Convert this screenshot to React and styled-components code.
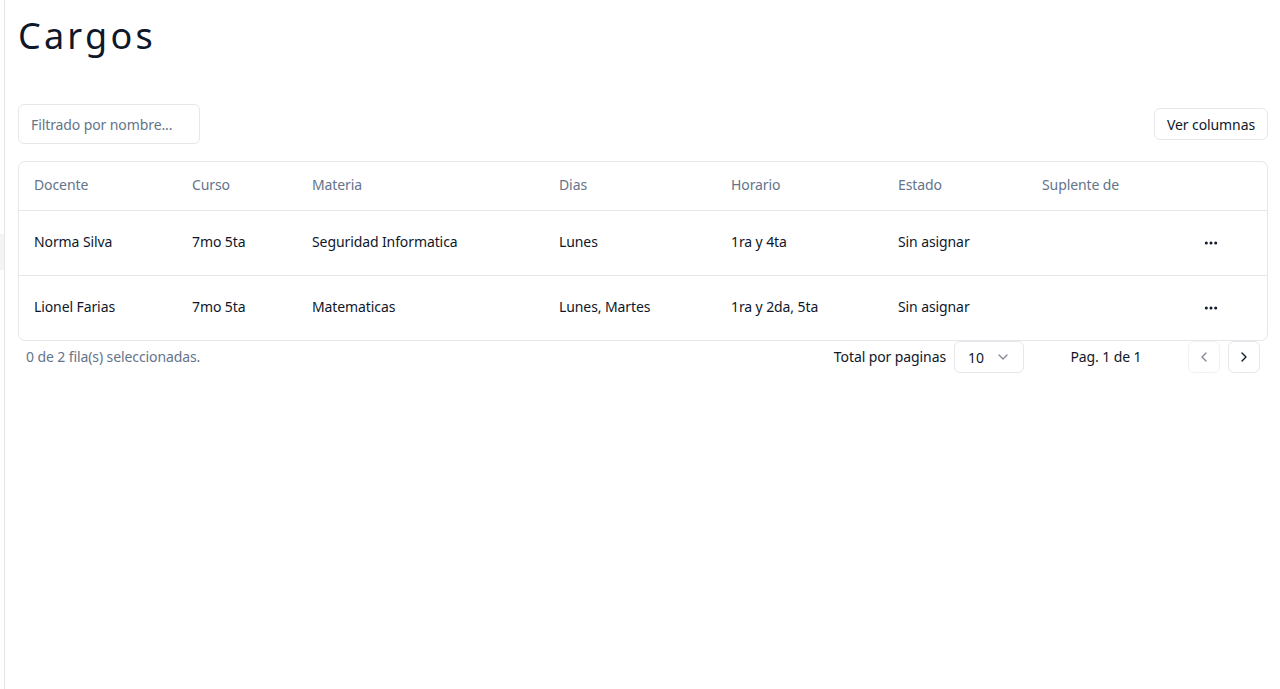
import React from "react";
import styled, { createGlobalStyle } from "styled-components";
import { MoreHorizontal, ChevronDown, ChevronLeft, ChevronRight } from "lucide-react";

const Global = createGlobalStyle`
  html, body, #root { height: 100%; }
  body {
    margin: 0;
    background: #ffffff;
    font-family: "Noto Sans", "Open Sans", sans-serif;
    color: #0f172a;
    -webkit-font-smoothing: antialiased;
  }
  * { box-sizing: border-box; }
`;

const Layout = styled.div`
  display: flex;
  min-height: 100vh;
`;

const Sidebar = styled.aside`
  width: 5px;
  flex: none;
  border-right: 1px solid #e4e4e7;
  padding-top: 234px;
`;

const SideItem = styled.div`
  height: 36px;
  background: #f4f4f5;
`;

const Main = styled.main`
  flex: 1;
  padding: 16px 12px 0 13px;
  min-width: 0;
`;

const Title = styled.h1`
  margin: 0;
  font-size: 36px;
  line-height: 40px;
  font-weight: 400;
  letter-spacing: 3.2px;
  color: #0f172a;
`;

const Toolbar = styled.div`
  display: flex;
  align-items: center;
  justify-content: space-between;
  margin-top: 48px;
  margin-bottom: 17px;
`;

const FilterInput = styled.input`
  width: 182px;
  height: 40px;
  border: 1px solid #e5e7eb;
  border-radius: 6px;
  padding: 0 12px;
  font-family: inherit;
  font-size: 14px;
  letter-spacing: -0.1px;
  color: #0f172a;
  background: #fff;
  outline: none;
  &::placeholder { color: #64748b; }
`;

const OutlineButton = styled.button`
  height: 32px;
  padding: 0 12px;
  border: 1px solid #e5e7eb;
  border-radius: 6px;
  background: #fff;
  font-family: inherit;
  font-size: 14px;
  letter-spacing: -0.1px;
  color: #0f172a;
  cursor: pointer;
`;

const TableWrap = styled.div`
  border: 1px solid #e5e7eb;
  border-radius: 7px;
  overflow: hidden;
`;

const Table = styled.table`
  width: 100%;
  border-collapse: collapse;
  table-layout: fixed;
  font-size: 14px;
  letter-spacing: -0.1px;
`;

const Col = styled.col`
  width: ${(p) => (p.$w ? `${p.$w}px` : "auto")};
`;

const HeadRow = styled.tr`
  height: 48px;
  border-bottom: 1px solid #e5e7eb;
`;

const Th = styled.th`
  text-align: left;
  font-weight: 400;
  color: #64748b;
  padding: 0 16px 2px 15px;
  white-space: nowrap;
`;

const Row = styled.tr`
  height: 65px;
  & + & { border-top: 1px solid #e5e7eb; }
`;

const Td = styled.td`
  padding: 0 16px 2px 15px;
  color: #0f172a;
  white-space: nowrap;
`;

const ActionTd = styled.td`
  padding: 0 16px;
`;

const IconButton = styled.button`
  width: 32px;
  height: 32px;
  display: inline-flex;
  align-items: center;
  justify-content: center;
  border: none;
  background: transparent;
  border-radius: 6px;
  color: #0f172a;
  padding: 0;
  cursor: pointer;
  vertical-align: middle;
`;

const Footer = styled.div`
  display: flex;
  align-items: center;
  justify-content: space-between;
  height: 32px;
  padding: 0 8px;
  font-size: 14px;
  letter-spacing: -0.1px;
`;

const Muted = styled.span`
  color: #64748b;
  margin-top: -2px;
`;

const Pager = styled.div`
  display: flex;
  align-items: center;
  gap: 32px;
`;

const Group = styled.div`
  display: flex;
  align-items: center;
  gap: 8px;
`;

const Label = styled.span`
  color: #0f172a;
  margin-top: -2px;
`;

const Select = styled.button`
  width: 70px;
  height: 32px;
  display: flex;
  align-items: center;
  justify-content: space-between;
  padding: 0 12px 0 13px;
  border: 1px solid #e5e7eb;
  border-radius: 6px;
  background: #fff;
  font-family: inherit;
  font-size: 14px;
  color: #0f172a;
  svg { opacity: 0.5; }
`;

const PageInfo = styled.div`
  width: 100px;
  text-align: center;
  color: #0f172a;
  margin-top: -2px;
`;

const NavButton = styled.button`
  width: 32px;
  height: 32px;
  display: flex;
  align-items: center;
  justify-content: center;
  padding: 0;
  border: 1px solid #e5e7eb;
  border-radius: 6px;
  background: #fff;
  color: #0f172a;
  opacity: ${(p) => (p.disabled ? 0.5 : 1)};
  cursor: ${(p) => (p.disabled ? "default" : "pointer")};
`;

const columns = ["Docente", "Curso", "Materia", "Dias", "Horario", "Estado", "Suplente de"];
const widths = [158, 120, 247, 172, 167, 144, 152, null];

const rows = [
  { docente: "Norma Silva", curso: "7mo 5ta", materia: "Seguridad Informatica", dias: "Lunes", horario: "1ra y 4ta", estado: "Sin asignar", suplente: "" },
  { docente: "Lionel Farias", curso: "7mo 5ta", materia: "Matematicas", dias: "Lunes, Martes", horario: "1ra y 2da, 5ta", estado: "Sin asignar", suplente: "" },
];

export default function App() {
  return (
    <>
      <Global />
      <Layout>
        <Sidebar>
          <SideItem />
        </Sidebar>
        <Main>
          <Title>Cargos</Title>
          <Toolbar>
            <FilterInput placeholder="Filtrado por nombre..." />
            <OutlineButton>Ver columnas</OutlineButton>
          </Toolbar>
          <TableWrap>
            <Table>
              <colgroup>
                {widths.map((w, i) => (
                  <Col key={i} $w={w} />
                ))}
              </colgroup>
              <thead>
                <HeadRow>
                  {columns.map((c, i) => (
                    <Th key={i}>{c}</Th>
                  ))}
                  <Th />
                </HeadRow>
              </thead>
              <tbody>
                {rows.map((r, i) => (
                  <Row key={i}>
                    <Td>{r.docente}</Td>
                    <Td>{r.curso}</Td>
                    <Td>{r.materia}</Td>
                    <Td>{r.dias}</Td>
                    <Td>{r.horario}</Td>
                    <Td>{r.estado}</Td>
                    <Td>{r.suplente}</Td>
                    <ActionTd>
                      <IconButton aria-label="Acciones">
                        <MoreHorizontal size={16} strokeWidth={2.5} />
                      </IconButton>
                    </ActionTd>
                  </Row>
                ))}
              </tbody>
            </Table>
          </TableWrap>
          <Footer>
            <Muted>0 de 2 fila(s) seleccionadas.</Muted>
            <Pager>
              <Group>
                <Label>Total por paginas</Label>
                <Select>
                  <span>10</span>
                  <ChevronDown size={16} />
                </Select>
              </Group>
              <PageInfo>Pag. 1 de 1</PageInfo>
              <Group>
                <NavButton disabled aria-label="Anterior">
                  <ChevronLeft size={16} />
                </NavButton>
                <NavButton aria-label="Siguiente">
                  <ChevronRight size={16} />
                </NavButton>
              </Group>
            </Pager>
          </Footer>
        </Main>
      </Layout>
    </>
  );
}
